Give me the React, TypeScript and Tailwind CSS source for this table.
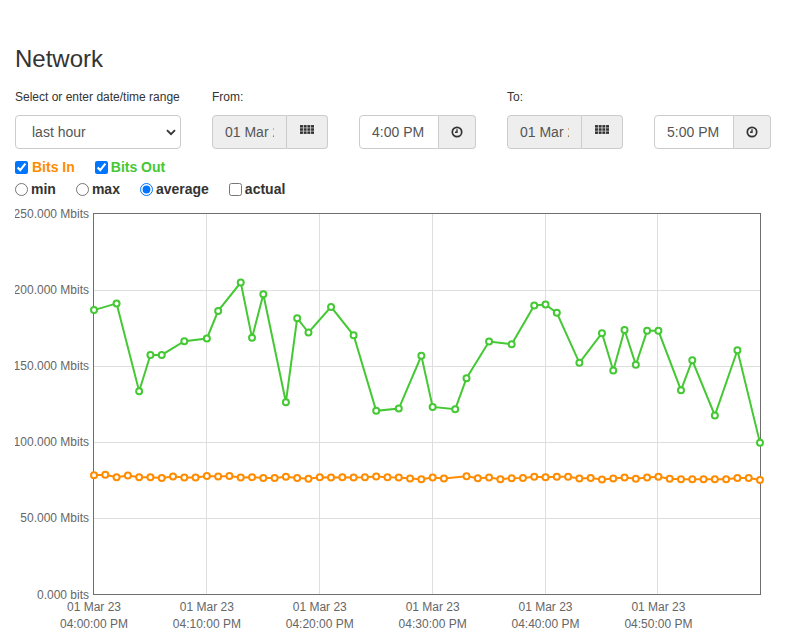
import React from 'react'

const orange: (number | null)[] = [
  78.3, 78.5, 77.0, 78.1, 77.0, 77.0, 76.5, 77.4, 76.8, 76.8,
  77.8, 77.4, 77.8, 76.8, 77.0, 76.5, 76.5, 77.2, 76.5, 75.9,
  77.0, 76.8, 77.0, 76.8, 77.0, 77.4, 77.0, 76.8, 76.1, 75.7,
  76.8, 76.1, null, 77.6, 76.3, 76.8, 75.7, 76.3, 76.5, 77.2,
  77.0, 77.2, 77.2, 76.1, 76.5, 75.5, 76.1, 76.8, 75.9, 76.8,
  77.2, 75.9, 75.7, 75.7, 75.7, 75.7, 75.7, 76.5, 76.5, 75.2,
]

// [minute slot, Mbits]
const green: [number, number][] = [
  [0, 186.6], [2, 191.0], [4, 133.4], [5, 157.2], [6, 157.2], [8, 166.2],
  [10, 168.0], [11, 186.1], [13, 204.7], [14, 168.4], [15, 197.0], [17, 126.2],
  [18, 181.3], [19, 171.9], [21, 188.7], [23, 170.1], [25, 120.5], [27, 122.0],
  [29, 156.6], [30, 123.1], [32, 121.6], [33, 141.9], [35, 166.0], [37, 164.2],
  [39, 189.6], [40, 190.3], [41, 184.8], [43, 152.0], [45, 171.5], [46, 147.0],
  [47, 173.6], [48, 150.7], [49, 173.0], [50, 173.0], [52, 134.1], [53, 153.7],
  [55, 117.5], [57, 160.3], [59, 99.5],
]

const LEFT = 94
const RIGHT = 760
const TOP = 213.5
const BOTTOM = 594.5
const px = (slot: number) => LEFT + (slot * (RIGHT - LEFT)) / 59
const py = (v: number) => BOTTOM - (v * (BOTTOM - TOP)) / 250

const yTicks = ['250.000 Mbits', '200.000 Mbits', '150.000 Mbits', '100.000 Mbits', '50.000 Mbits', '0.000 bits']
const xTicks = ['04:00:00 PM', '04:10:00 PM', '04:20:00 PM', '04:30:00 PM', '04:40:00 PM', '04:50:00 PM']

function GridIcon() {
  const cells = []
  for (let r = 0; r < 3; r++)
    for (let c = 0; c < 4; c++)
      cells.push(<rect key={`${r}-${c}`} x={c * 3.5} y={r * 3} width={2.8} height={2.4} fill="#333" />)
  return (
    <svg width="14" height="9" viewBox="0 0 13.3 8.4" className="mb-[5px]">
      {cells}
    </svg>
  )
}

function ClockIcon() {
  return (
    <svg width="12" height="12" viewBox="0 0 12 12">
      <circle cx="6" cy="6" r="4.7" fill="none" stroke="#333" strokeWidth="1.7" />
      <path d="M6 3.2V6.3H4" fill="none" stroke="#333" strokeWidth="1.4" />
    </svg>
  )
}

function DateGroup({ value }: { value: string }) {
  return (
    <div className="flex h-[34px] w-[116px]">
      <input
        readOnly
        value={value}
        className="w-[75px] h-full border border-[#ccc] rounded-l-[4px] bg-[#eee] px-[12px] text-[14px] text-[#555] outline-none"
      />
      <div className="flex-1 flex items-center justify-center border border-l-0 border-[#ccc] rounded-r-[4px] bg-[#eee]">
        <GridIcon />
      </div>
    </div>
  )
}

function TimeGroup({ value }: { value: string }) {
  return (
    <div className="flex h-[34px] w-[117px]">
      <input
        readOnly
        value={value}
        className="w-[80px] h-full border border-[#ccc] rounded-l-[4px] bg-white px-[12px] text-[14px] text-[#555] outline-none"
      />
      <div className="flex-1 flex items-center justify-center border border-l-0 border-[#ccc] rounded-r-[4px] bg-[#eee]">
        <ClockIcon />
      </div>
    </div>
  )
}

function Chart() {
  const greenPts = green.map(([s, v]) => `${px(s)},${py(v)}`).join(' ')
  const orangePts = orange
    .map((v, i) => (v === null ? null : `${px(i)},${py(v)}`))
    .filter(Boolean)
    .join(' ')
  return (
    <svg width="757" height="429" viewBox="15 205 757 429" className="block mt-[6px]" fontFamily='"Liberation Sans", Arial, sans-serif'>
      {[1, 2, 3, 4].map((k) => {
        const y = Math.round(TOP + (k * (BOTTOM - TOP)) / 5) + 0.5
        return <line key={k} x1={93.5} x2={760.5} y1={y} y2={y} stroke="#dedede" strokeWidth="1" />
      })}
      {[1, 2, 3, 4, 5].map((k) => {
        const x = Math.round(px(k * 10)) - 0.5
        return <line key={k} x1={x} x2={x} y1={TOP} y2={BOTTOM} stroke="#dedede" strokeWidth="1" />
      })}
      <rect x={93.5} y={TOP} width={667} height={BOTTOM - TOP} fill="none" stroke="#6e6e6e" strokeWidth="1" />
      {yTicks.map((t, k) => (
        <text key={t} x={89} y={TOP + (k * (BOTTOM - TOP)) / 5 + 4} textAnchor="end" fontSize="12" fill="#666">
          {t}
        </text>
      ))}
      {xTicks.map((t, k) => (
        <g key={t} fontSize="12" fill="#666" textAnchor="middle">
          <text x={px(k * 10)} y={611}>01 Mar 23</text>
          <text x={px(k * 10)} y={628}>{t}</text>
        </g>
      ))}
      <polyline points={orangePts} fill="none" stroke="#ff8c00" strokeWidth="2" />
      {orange.map((v, i) =>
        v === null ? null : <circle key={i} cx={px(i)} cy={py(v)} r="3" fill="#fff" stroke="#ff8c00" strokeWidth="2" />
      )}
      <polyline points={greenPts} fill="none" stroke="#44c833" strokeWidth="2" />
      {green.map(([s, v]) => (
        <circle key={s} cx={px(s)} cy={py(v)} r="3" fill="#fff" stroke="#44c833" strokeWidth="2" />
      ))}
    </svg>
  )
}

export default function App() {
  return (
    <div className="min-h-[634px] bg-white pt-[46px] px-[15px] text-[#333] overflow-hidden" style={{ fontFamily: '"Liberation Sans", Arial, sans-serif' }}>
      <h2 className="text-[24px] leading-[26px] font-normal">Network</h2>

      {/* Range controls */}
      <div className="mt-[17px] flex gap-[31px]">
        <div className="w-[166px]">
          <div className="text-[12px] leading-[17px]">Select or enter date/time range</div>
          <div className="relative mt-[9px] h-[34px]">
            <select className="appearance-none w-full h-full border border-[#ccc] rounded-[4px] bg-white pl-[16px] text-[14px] text-[#555] outline-none">
              <option>last hour</option>
            </select>
            <svg width="10" height="7" viewBox="0 0 10 7" className="absolute right-[5px] top-[14px] pointer-events-none">
              <path d="M1 1.2L5 5.2L9 1.2" fill="none" stroke="#333" strokeWidth="1.8" />
            </svg>
          </div>
        </div>
        <div>
          <div className="text-[12px] leading-[17px]">From:</div>
          <div className="mt-[9px] flex gap-[31px]">
            <DateGroup value="01 Mar 23" />
            <TimeGroup value="4:00 PM" />
          </div>
        </div>
        <div>
          <div className="text-[12px] leading-[17px]">To:</div>
          <div className="mt-[9px] flex gap-[31px]">
            <DateGroup value="01 Mar 23" />
            <TimeGroup value="5:00 PM" />
          </div>
        </div>
      </div>

      {/* Series toggles */}
      <div className="mt-[8px] flex items-center gap-[20px] h-[20px] text-[14px] leading-[20px] font-bold">
        <label className="flex items-center">
          <input type="checkbox" defaultChecked className="m-0 w-[13px] h-[13px]" />
          <span className="ml-[4px] text-[#ff8c00]">Bits In</span>
        </label>
        <label className="flex items-center">
          <input type="checkbox" defaultChecked className="m-0 w-[13px] h-[13px]" />
          <span className="ml-[3px] text-[#44c833]">Bits Out</span>
        </label>
      </div>

      <div className="mt-[2px] flex items-center gap-[20px] h-[20px] text-[14px] leading-[20px] font-bold">
        {['min', 'max', 'average'].map((m) => (
          <label key={m} className="flex items-center">
            <input type="radio" name="agg" defaultChecked={m === 'average'} className="m-0 w-[13px] h-[13px]" />
            <span className="ml-[3px]">{m}</span>
          </label>
        ))}
        <label className="flex items-center">
          <input type="checkbox" className="m-0 w-[13px] h-[13px]" />
          <span className="ml-[3px]">actual</span>
        </label>
      </div>

      <Chart />
    </div>
  )
}
